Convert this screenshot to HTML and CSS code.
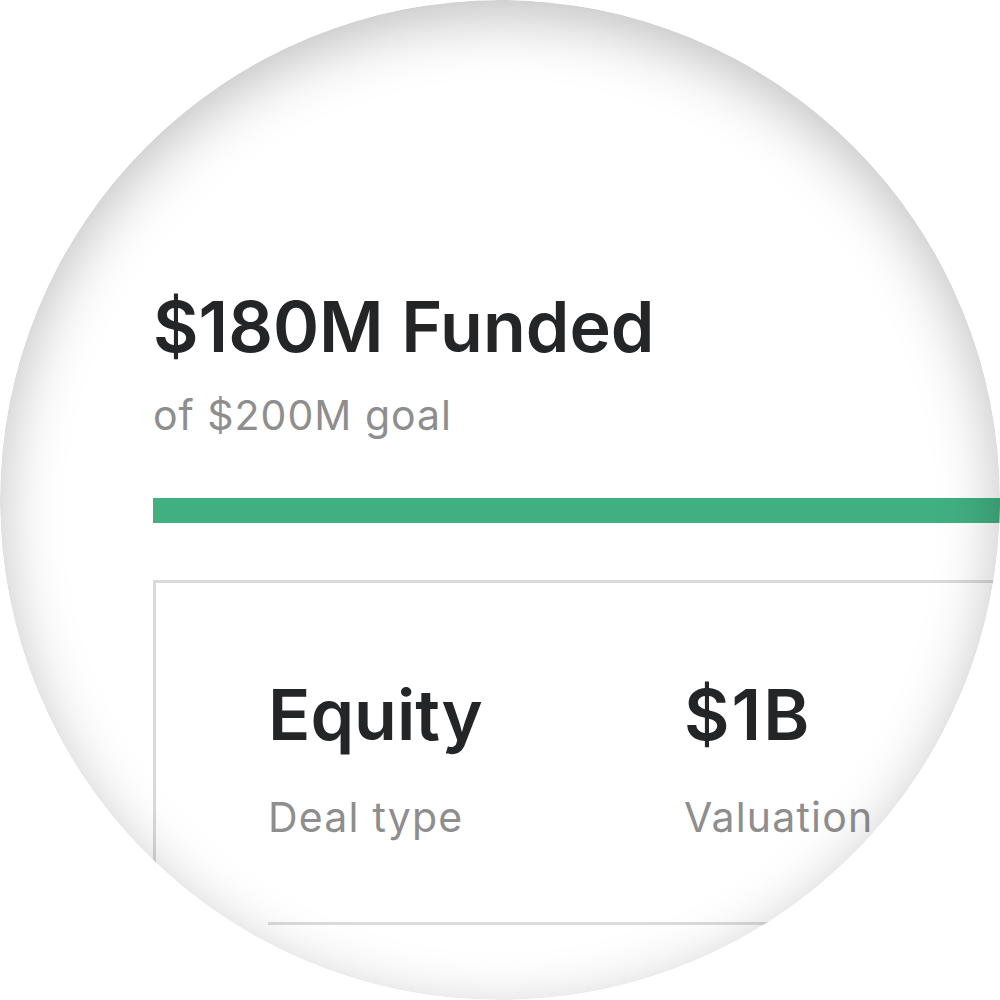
FILE: index.html
```html
<!DOCTYPE html>
<html lang="en">
<head>
<meta charset="utf-8">
<title>Funding</title>
<link rel="stylesheet" href="styles.css">
</head>
<body>
<div class="lens">
  <div class="content">
    <h1 class="raised">$180M Funded</h1>
    <p class="goal">of $200M goal</p>
    <div class="progress"><div class="fill" style="width: 90%"></div></div>
    <div class="card">
      <div class="stats">
        <div class="stat">
          <div class="value">Equity</div>
          <div class="label">Deal type</div>
        </div>
        <div class="stat">
          <div class="value">$1B</div>
          <div class="label">Valuation</div>
        </div>
      </div>
    </div>
  </div>
</div>
</body>
</html>
```

FILE: styles.css
```css
html, body {
  margin: 0;
  padding: 0;
  background: #ffffff;
}

body {
  width: 1000px;
  height: 1000px;
  font-family: Inter, "Noto Sans", "Liberation Sans", sans-serif;
  color: #232527;
}

.lens {
  position: relative;
  width: 1000px;
  height: 1000px;
  border-radius: 50%;
  overflow: hidden;
  background: #ffffff;
}

.lens::after {
  content: "";
  position: absolute;
  inset: 0;
  border-radius: 50%;
  box-shadow: inset 0 16px 60px rgba(0, 0, 0, 0.25);
  pointer-events: none;
}

.content {
  width: 1300px;
  padding: 292px 0 0 153px;
  box-sizing: border-box;
}

.raised {
  margin: 0;
  font-size: 70px;
  line-height: 1;
  font-weight: 600;
}

.goal {
  margin: 33px 0 0;
  font-size: 41px;
  line-height: 1;
  font-weight: 400;
  letter-spacing: 1px;
  color: #8e8e8e;
}

.progress {
  margin-top: 62px;
  height: 25px;
  background: #e4e4e4;
}

.fill {
  height: 100%;
  background: #41b080;
}

.card {
  margin-top: 57px;
  border: 3px solid #dadada;
  padding: 97px 0 0 112px;
  height: 600px;
}

.stats {
  display: grid;
  grid-template-columns: 416px 416px;
  padding-bottom: 84px;
  border-bottom: 3px solid #dcdcdc;
}

.value {
  font-size: 70px;
  line-height: 1;
  font-weight: 600;
}

.stat + .stat .value {
  letter-spacing: 2px;
}

.label {
  margin-top: 47px;
  font-size: 41px;
  line-height: 1;
  letter-spacing: 1.2px;
  color: #8e8e8e;
}
```
